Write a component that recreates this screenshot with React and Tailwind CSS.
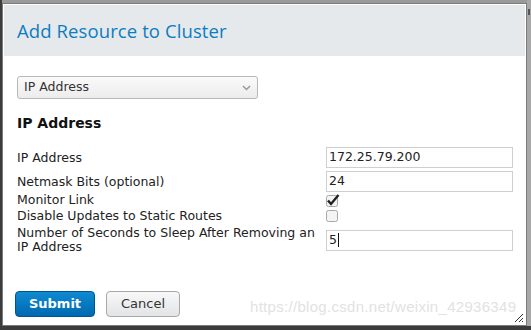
import React from "react";

export default function App() {
  const lbl = "text-[12.5px] leading-[14px] text-[#222]";
  return (
    <div className="w-[531px] h-[330px] bg-[#3c3c3c] overflow-hidden relative" style={{ fontFamily: '"DejaVu Sans", sans-serif' }}>
      <div className="absolute left-[2px] top-0 w-[529px] h-[3px] bg-[#9a9a9a]" />
      <div className="absolute right-0 top-0 w-[4px] h-[326px] bg-[#a8a8a8]" />
      <div className="absolute right-[1px] top-[9px] w-[2px] h-[6px] bg-[#555]" />
      <div className="absolute left-[2px] top-[3px] w-[525px] h-[323px] bg-[#7b7b7b] p-[1px]">
        <div className="w-full h-full bg-white flex flex-col relative">
          <div className="mx-[1px] mt-[1px] h-[51px] bg-[#e6e9ec] flex items-center pl-[13px]">
            <span className="text-[18.5px] font-medium text-[#0b7dc1] tracking-[0.1px]" style={{ fontFamily: '"Open Sans", sans-serif' }}>Add Resource to Cluster</span>
          </div>
          <div className="pl-[14px] pt-[20px] flex flex-col">
            <div className="w-[241px] h-[23px] border border-[#b8b8b8] rounded-[3px] bg-gradient-to-b from-[#fafafa] to-[#ececec] flex items-center justify-between pl-[6px] pr-[6px]">
              <span className="text-[12.5px] text-[#333]">IP Address</span>
              <svg width="9" height="6" viewBox="0 0 9 6"><path d="M1 1l3.5 3.5L8 1" fill="none" stroke="#999" strokeWidth="1.5" /></svg>
            </div>
            <div className="mt-[14px] text-[14px] font-bold text-[#111]">IP Address</div>
            <div className="mt-[13px] flex flex-col">
              <div className="flex items-center h-[21px]">
                <span className={`${lbl} w-[309px]`}>IP Address</span>
                <div className="w-[187px] h-[21px] border border-[#cfcfcf] flex items-center pl-[2px] text-[12.5px] text-[#222]">172.25.79.200</div>
              </div>
              <div className="flex items-center h-[21px] mt-[3px]">
                <span className={`${lbl} w-[309px]`}>Netmask Bits (optional)</span>
                <div className="w-[187px] h-[21px] border border-[#cfcfcf] flex items-center pl-[2px] text-[12.5px] text-[#222]">24</div>
              </div>
              <div className="flex items-center h-[16px]">
                <span className={`${lbl} w-[309px]`}>Monitor Link</span>
                <svg width="14" height="13" viewBox="0 0 14 13">
                  <rect x="0.5" y="1.5" width="11" height="11" rx="2" fill="#f4f4f4" stroke="#a8a8a8" />
                  <path d="M2 6.5l3 3.5L12.5 1" fill="none" stroke="#222" strokeWidth="2.4" />
                </svg>
              </div>
              <div className="flex items-center h-[16px]">
                <span className={`${lbl} w-[309px]`}>Disable Updates to Static Routes</span>
                <svg width="14" height="13" viewBox="0 0 14 13">
                  <rect x="0.5" y="0.5" width="11" height="11" rx="2" fill="#f4f4f4" stroke="#a8a8a8" />
                </svg>
              </div>
              <div className="flex items-center mt-[2px]">
                <span className={`${lbl} w-[309px] leading-[13px]`}>Number of Seconds to Sleep After Removing an IP Address</span>
                <div className="w-[187px] h-[21px] border border-[#cfcfcf] flex items-center pl-[2px] text-[12.5px] text-[#222]">5<span className="w-[1px] h-[14px] bg-[#111] ml-[1px]" /></div>
              </div>
            </div>
          </div>
          <div className="absolute left-[12px] top-[287px] flex gap-[11px]">
            <div className="w-[80px] h-[26px] rounded-[4px] border border-[#00558f] bg-gradient-to-b from-[#0f8ad2] to-[#0069b0] flex items-center justify-center text-white text-[13px] font-bold">Submit</div>
            <div className="w-[74px] h-[26px] rounded-[4px] border border-[#a8a8a8] bg-gradient-to-b from-[#f8f8f8] to-[#e2e4e6] flex items-center justify-center text-[#333] text-[13px]">Cancel</div>
          </div>
          <div className="absolute left-[247px] top-[292px] text-[15px] text-[#e2e2e2] tracking-[0.3px]" style={{ fontFamily: '"Liberation Sans", sans-serif' }}>https://blog.csdn.net/weixin_42936349</div>
          <svg className="absolute right-[2px] bottom-[2px]" width="10" height="10" viewBox="0 0 10 10">
            <path d="M9 1L1 9M9 5L5 9M9 8L8 9" stroke="#333" strokeWidth="1" />
          </svg>
        </div>
      </div>
    </div>
  );
}
